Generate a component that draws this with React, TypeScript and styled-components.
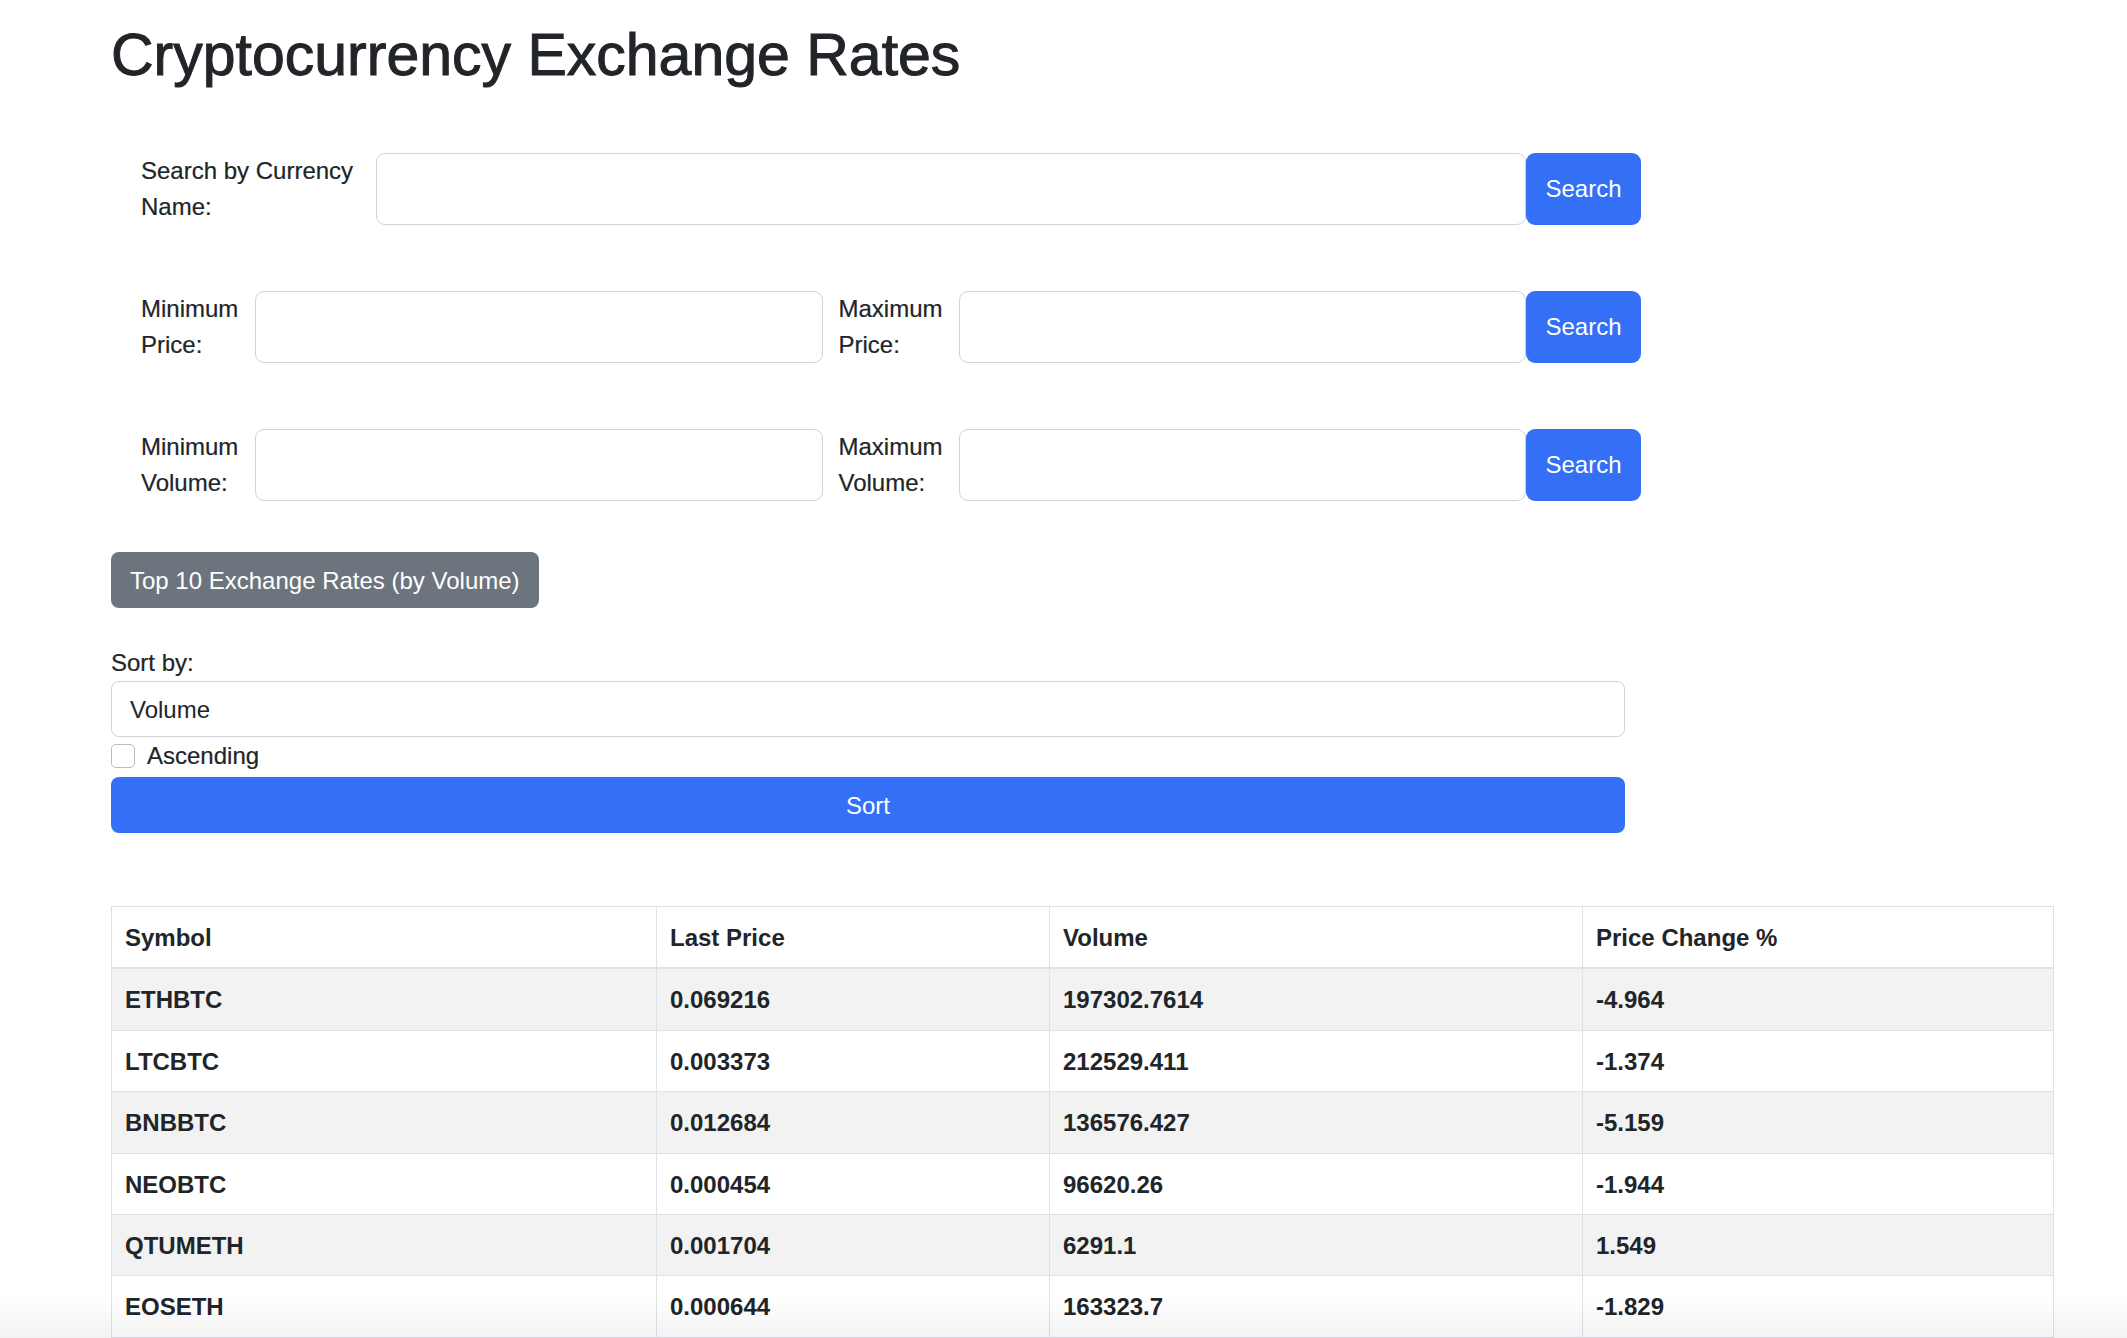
import React, { FC } from "react";
import styled, { createGlobalStyle } from "styled-components";

const Colors = {
  text: "#212529",
  border: "#ced4da",
  tableBorder: "#dee2e6",
  primary: "#3370f5",
  secondary: "#6c757d",
  stripe: "#f2f2f2",
};

const GlobalStyle = createGlobalStyle`
  html, body {
    margin: 0;
    padding: 0;
    overflow: hidden;
    background: #fff;
  }
  body {
    font-family: "Liberation Sans", Arial, sans-serif;
    font-size: 24px;
    line-height: 36px;
    color: ${Colors.text};
  }
  * { box-sizing: border-box; }
`;

type Rate = {
  symbol: string;
  lastPrice: string;
  volume: string;
  change: string;
};

const rates: Rate[] = [
  { symbol: "ETHBTC", lastPrice: "0.069216", volume: "197302.7614", change: "-4.964" },
  { symbol: "LTCBTC", lastPrice: "0.003373", volume: "212529.411", change: "-1.374" },
  { symbol: "BNBBTC", lastPrice: "0.012684", volume: "136576.427", change: "-5.159" },
  { symbol: "NEOBTC", lastPrice: "0.000454", volume: "96620.26", change: "-1.944" },
  { symbol: "QTUMETH", lastPrice: "0.001704", volume: "6291.1", change: "1.549" },
  { symbol: "EOSETH", lastPrice: "0.000644", volume: "163323.7", change: "-1.829" },
];

const App: FC = () => {
  const [ascending, setAscending] = React.useState(false);

  return (
    <>
      <GlobalStyle />
      <Page>
        <Title>Cryptocurrency Exchange Rates</Title>

        <FormRow>
          <Label width={235}>Search by Currency Name:</Label>
          <Input type="text" />
          <SearchButton>Search</SearchButton>
        </FormRow>

        <FormRow>
          <Label width={114}>Minimum Price:</Label>
          <Input type="text" />
          <Gap />
          <Label width={120}>Maximum Price:</Label>
          <Input type="text" />
          <SearchButton>Search</SearchButton>
        </FormRow>

        <FormRow>
          <Label width={114}>Minimum Volume:</Label>
          <Input type="text" />
          <Gap />
          <Label width={120}>Maximum Volume:</Label>
          <Input type="text" />
          <SearchButton>Search</SearchButton>
        </FormRow>

        <TopButton>Top 10 Exchange Rates (by Volume)</TopButton>

        <SortSection>
          <SortLabel>Sort by:</SortLabel>
          <Select defaultValue="volume">
            <option value="volume">Volume</option>
            <option value="price">Last Price</option>
            <option value="change">Price Change %</option>
          </Select>
          <CheckRow>
            <CheckBox
              type="checkbox"
              checked={ascending}
              onChange={() => setAscending(!ascending)}
            />
            Ascending
          </CheckRow>
          <SortButton>Sort</SortButton>
        </SortSection>

        <Table>
          <colgroup>
            <col style={{ width: 545 }} />
            <col style={{ width: 393 }} />
            <col style={{ width: 533 }} />
            <col />
          </colgroup>
          <thead>
            <tr>
              <Th>Symbol</Th>
              <Th>Last Price</Th>
              <Th>Volume</Th>
              <Th>Price Change %</Th>
            </tr>
          </thead>
          <tbody>
            {rates.map((rate, i) => (
              <Row key={rate.symbol} striped={i % 2 === 0}>
                <Td>{rate.symbol}</Td>
                <Td>{rate.lastPrice}</Td>
                <Td>{rate.volume}</Td>
                <Td>{rate.change}</Td>
              </Row>
            ))}
          </tbody>
        </Table>
      </Page>
      <BottomFade />
    </>
  );
};

export default App;

const Page = styled.div`
  padding: 20px 0 0 111px;
`;

const Title = styled.h1`
  margin: 0 0 63px 0;
  font-size: 59px;
  line-height: 70px;
  font-weight: 400;
  -webkit-text-stroke: 1px ${Colors.text};
`;

const FormRow = styled.div`
  display: flex;
  align-items: stretch;
  width: 1530px;
  height: 72px;
  padding-left: 30px;
  margin-bottom: 66px;
`;

const Label = styled.label<{ width: number }>`
  flex: 0 0 ${(p) => p.width}px;
  width: ${(p) => p.width}px;
  padding-right: 14px;
  line-height: 36px;
  -webkit-text-stroke: 0.2px ${Colors.text};
`;

const Gap = styled.div`
  flex: 0 0 16px;
`;

const Input = styled.input`
  flex: 1 1 0;
  min-width: 0;
  border: 1.5px solid ${Colors.border};
  border-radius: 9px;
  padding: 0 18px;
  font: inherit;
  background: #fff;
`;

const SearchButton = styled.button`
  flex: 0 0 115px;
  border: none;
  border-radius: 9px;
  background: ${Colors.primary};
  color: #fff;
  font: inherit;
  padding: 0;
`;

const TopButton = styled.button`
  display: block;
  margin: -15px 0 37px;
  height: 56px;
  padding: 2px 19px 0;
  border: none;
  border-radius: 8px;
  background: ${Colors.secondary};
  color: #fff;
  font: inherit;
  line-height: 36px;
`;

const SortSection = styled.div`
  width: 1514px;
  display: flex;
  flex-direction: column;
`;

const SortLabel = styled.label`
  line-height: 36px;
  -webkit-text-stroke: 0.2px ${Colors.text};
`;

const Select = styled.select`
  appearance: none;
  -webkit-appearance: none;
  height: 56px;
  padding: 2px 18px 0;
  border: 1.5px solid ${Colors.border};
  border-radius: 8px;
  background: #fff;
  color: ${Colors.text};
  font: inherit;
`;

const CheckRow = styled.label`
  display: flex;
  align-items: center;
  gap: 12px;
  height: 36px;
  padding-top: 2px;
  -webkit-text-stroke: 0.2px ${Colors.text};
`;

const CheckBox = styled.input`
  appearance: none;
  -webkit-appearance: none;
  margin: 0;
  width: 24px;
  height: 24px;
  border: 1.5px solid #b8bec4;
  border-radius: 5px;
  background: #fff;
`;

const SortButton = styled.button`
  margin-top: 4px;
  height: 56px;
  padding-top: 2px;
  border: none;
  border-radius: 8px;
  background: ${Colors.primary};
  color: #fff;
  font: inherit;
`;

const Table = styled.table`
  margin-top: 73px;
  width: 1943px;
  border-collapse: collapse;
  table-layout: fixed;
  font-weight: 700;
`;

const Th = styled.th`
  text-align: left;
  padding: 13px 13px 11px;
  line-height: 36.4px;
  border: 1px solid ${Colors.tableBorder};
  border-bottom-width: 2px;
  font-weight: 700;
  background: #fff;
`;

const Row = styled.tr<{ striped: boolean }>`
  background: ${(p) => (p.striped ? Colors.stripe : "#fff")};
`;

const Td = styled.td`
  padding: 13px 13px 11px;
  line-height: 36.4px;
  border: 1px solid ${Colors.tableBorder};
`;

const BottomFade = styled.div`
  position: fixed;
  left: 0;
  right: 0;
  bottom: 0;
  height: 40px;
  pointer-events: none;
  background: linear-gradient(to bottom, rgba(0, 0, 0, 0), rgba(0, 0, 0, 0.05));
`;
